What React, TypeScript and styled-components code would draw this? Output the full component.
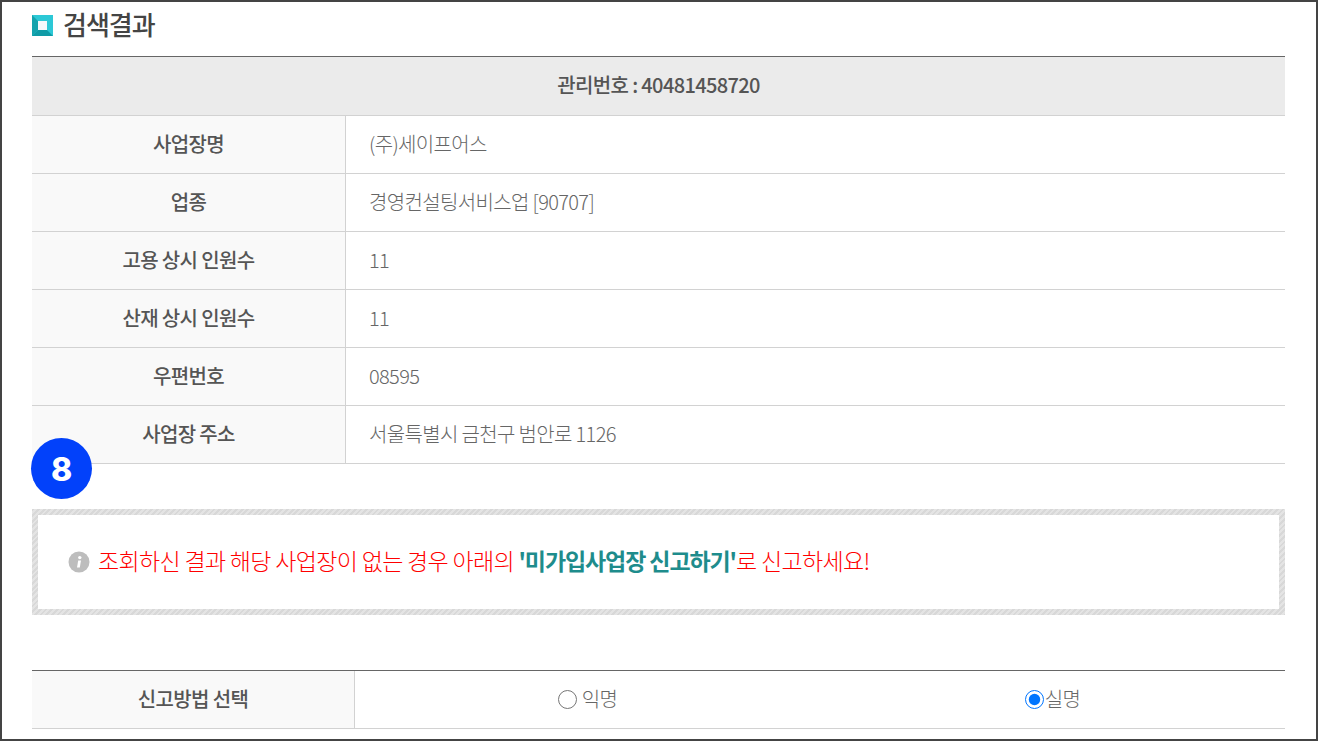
import styled, { createGlobalStyle } from "styled-components"

const GlobalStyle = createGlobalStyle`
  html, body {
    margin: 0;
    padding: 0;
    background: #fff;
  }
  * {
    box-sizing: border-box;
  }
`

const Frame = styled.div`
  position: relative;
  height: 741px;
  overflow: hidden;
  padding: 0 31px 0 30px;
  border: 2px solid #444;
  background: #fff;
  color: #666;
  font-family: "Noto Sans CJK KR", "Noto Sans", sans-serif;
`

const TitleRow = styled.div`
  display: flex;
  align-items: center;
  gap: 10px;
  height: 54px;
  padding-bottom: 8px;
`

const TitleMark = styled.svg`
  flex: none;
  width: 21px;
  height: 21px;
`

const Title = styled.h2`
  margin: -3px 0 0;
  color: #444;
  font-size: 26px;
  font-weight: 500;
  letter-spacing: -1px;
`

const Table = styled.div`
  border-top: 1px solid #666;
`

const HeadRow = styled.div`
  display: flex;
  align-items: center;
  justify-content: center;
  height: 59px;
  padding-bottom: 3px;
  border-bottom: 1px solid #d2d2d2;
  background: #ebebeb;
  color: #555;
  font-size: 20px;
  font-weight: 500;
  letter-spacing: -0.63px;
`

const Row = styled.div<{ $labelWidth: number }>`
  display: grid;
  grid-template-columns: ${(p) => p.$labelWidth}px 1fr;
  height: 58px;
  border-bottom: 1px solid #d2d2d2;
`

const Label = styled.div`
  display: flex;
  align-items: center;
  justify-content: center;
  padding-bottom: 2px;
  border-right: 1px solid #d2d2d2;
  background: #f9f9f9;
  color: #555;
  font-size: 20px;
  font-weight: 500;
  letter-spacing: -0.65px;
`

const Value = styled.div`
  display: flex;
  align-items: center;
  padding: 0 0 2px 23px;
  color: #666;
  font-size: 20px;
  font-weight: 300;
  letter-spacing: -0.65px;
`

const Badge = styled.div`
  position: absolute;
  top: 436px;
  left: 29px;
  display: flex;
  align-items: center;
  justify-content: center;
  width: 61px;
  height: 61px;
  padding-top: 2px;
  border-radius: 50%;
  background: #0241fa;
  color: #fff;
  font-family: "Inter", sans-serif;
  font-size: 32px;
  font-weight: 800;
`

const Notice = styled.div`
  margin-top: 45px;
  padding: 6px;
  background: repeating-linear-gradient(135deg, #d8d8d8 0 2px, #e4e4e4 2px 4px);
`

const NoticeInner = styled.div`
  display: flex;
  align-items: center;
  gap: 8px;
  height: 94px;
  padding-left: 30px;
  background: #fff;
  color: #f00;
  font-size: 23px;
  font-weight: 300;
  letter-spacing: -0.66px;
`

const NoticeText = styled.span`
  margin-top: -4px;
`

const InfoIcon = styled.svg`
  flex: none;
  width: 22px;
  height: 22px;
`

const Strong = styled.b`
  color: #1e8c8c;
  font-weight: 700;
  letter-spacing: -1.1px;
`

const MethodTable = styled(Table)`
  margin-top: 55px;
`

const Choices = styled.div`
  display: grid;
  grid-template-columns: 1fr 1fr;
`

const Choice = styled.label<{ $gap: number; $shift: number }>`
  display: flex;
  align-items: center;
  justify-content: center;
  gap: ${(p) => p.$gap}px;
  padding: 0 0 2px ${(p) => p.$shift}px;
  color: #666;
  font-size: 20px;
  font-weight: 300;
  letter-spacing: -0.6px;
`

const Radio = styled.input`
  width: 19px;
  height: 19px;
  margin: 2px 0 0;
  accent-color: #0075ff;
`

const rows = [
  ["사업장명", "(주)세이프어스"],
  ["업종", "경영컨설팅서비스업 [90707]"],
  ["고용 상시 인원수", "11"],
  ["산재 상시 인원수", "11"],
  ["우편번호", "08595"],
  ["사업장 주소", "서울특별시 금천구 범안로 1126"],
]

function App() {
  return (
    <Frame>
      <GlobalStyle />
      <TitleRow>
        <TitleMark viewBox="0 0 21 21">
          <rect width="21" height="21" fill="#2cc8d6" />
          <polygon points="0,0 6,6 6,15 0,21" fill="#14a3ad" />
          <polygon points="0,21 6,15 15,15 21,21" fill="#0f9ba6" />
          <rect x="6" y="6" width="9" height="9" fill="#f4f8fb" />
        </TitleMark>
        <Title>검색결과</Title>
      </TitleRow>

      <Table>
        <HeadRow>관리번호 : 40481458720</HeadRow>
        {rows.map(([label, value]) => (
          <Row key={label} $labelWidth={314}>
            <Label>{label}</Label>
            <Value>{value}</Value>
          </Row>
        ))}
      </Table>

      <Badge>8</Badge>

      <Notice>
        <NoticeInner>
          <InfoIcon viewBox="0 0 22 22">
            <circle cx="11" cy="11" r="10.5" fill="#bdbdbd" />
            <circle cx="11.8" cy="6.6" r="1.7" fill="#fff" />
            <path d="M10.2 9.6h2.8l-1.2 6.8h-2.8z" fill="#fff" />
          </InfoIcon>
          <NoticeText>
            조회하신 결과 해당 사업장이 없는 경우 아래의 <Strong>'미가입사업장 신고하기'</Strong>로 신고하세요!
          </NoticeText>
        </NoticeInner>
      </Notice>

      <MethodTable>
        <Row $labelWidth={323}>
          <Label>신고방법 선택</Label>
          <Choices>
            <Choice $gap={5} $shift={0}>
              <Radio type="radio" name="method" />
              익명
            </Choice>
            <Choice $gap={1} $shift={0}>
              <Radio type="radio" name="method" defaultChecked />
              실명
            </Choice>
          </Choices>
        </Row>
      </MethodTable>
    </Frame>
  )
}

export default App
